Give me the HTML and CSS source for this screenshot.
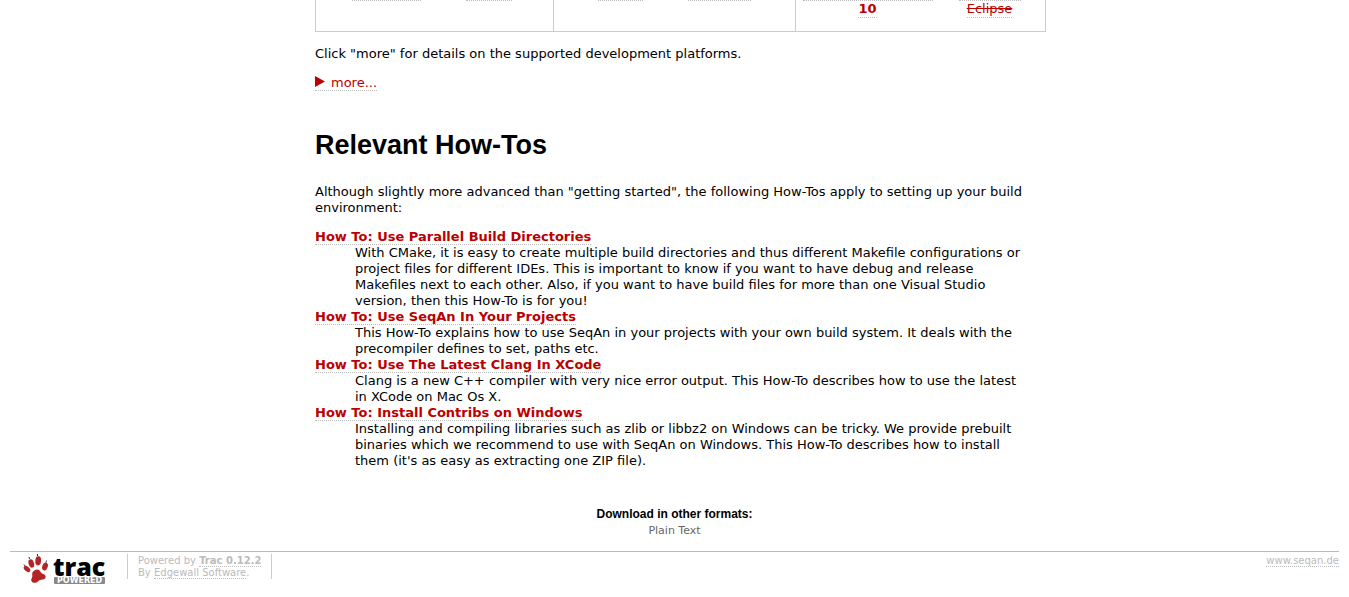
FILE: index.html
```
<!DOCTYPE html>
<html lang="en">
<head>
<meta charset="utf-8">
<title>Getting Started</title>
<link rel="stylesheet" href="styles.css">
</head>
<body>
<main class="wiki">
  <table class="platforms">
    <tbody>
      <tr>
        <td class="windows"><div class="links"><a href="#" class="link rule-69" aria-label="Windows"></a><a href="#" class="link rule-46" aria-label="Makefiles"></a></div></td>
        <td class="linux"><div class="links"><a href="#" class="link rule-45" aria-label="Linux"></a><a href="#" class="link rule-63" aria-label="Eclipse"></a></div></td>
        <td class="visual"><div class="links">
          <div class="stack"><a href="#" class="link rule-130" aria-label="Visual Studio"></a><a href="#" class="link"><b>10</b></a></div>
          <div class="stack"><a href="#" class="link rule-62" aria-label="Windows Eclipse"></a><a href="#" class="link"><del>Eclipse</del></a></div>
        </div></td>
      </tr>
    </tbody>
  </table>
  <p>Click "more" for details on the supported development platforms.</p>
  <p><a href="#" class="link"><svg class="arrow" viewBox="0 0 10 11" aria-hidden="true"><path d="M0 0 10 5.500 0 11z"/></svg>more...</a></p>
  <h1>Relevant How-Tos</h1>
  <p>Although slightly more advanced than "getting started", the following How-Tos apply to setting up your build<br>environment:</p>
  <dl>
    <dt><a href="#" class="link">How To: Use Parallel Build Directories</a></dt>
    <dd>With CMake, it is easy to create multiple build directories and thus different Makefile configurations or<br>project files for different IDEs. This is important to know if you want to have debug and release<br>Makefiles next to each other. Also, if you want to have build files for more than one Visual Studio<br>version, then this How-To is for you!</dd>
    <dt><a href="#" class="link">How To: Use SeqAn In Your Projects</a></dt>
    <dd>This How-To explains how to use SeqAn in your projects with your own build system. It deals with the<br>precompiler defines to set, paths etc.</dd>
    <dt><a href="#" class="link">How To: Use The Latest Clang In XCode</a></dt>
    <dd>Clang is a new C++ compiler with very nice error output. This How-To describes how to use the latest<br>in XCode on Mac Os X.</dd>
    <dt><a href="#" class="link">How To: Install Contribs on Windows</a></dt>
    <dd>Installing and compiling libraries such as zlib or libbz2 on Windows can be tricky. We provide prebuilt<br>binaries which we recommend to use with SeqAn on Windows. This How-To describes how to install<br>them (it's as easy as extracting one ZIP file).</dd>
  </dl>
</main>
<section class="formats">
  <h3>Download in other formats:</h3>
  <a href="#">Plain Text</a>
</section>
<footer class="footer">
  <a href="#" class="logo" aria-label="Trac Powered">
    <svg viewBox="0 0 84 30" aria-hidden="true">
      <g class="paw">
        <ellipse cx="4" cy="15" rx="2.300" ry="3.800" transform="rotate(-50 4 15)"/>
        <ellipse cx="8.300" cy="9.500" rx="2.700" ry="4.300" transform="rotate(-18 8.300 9.500)"/>
        <ellipse cx="15.200" cy="6.800" rx="2.900" ry="4.600" transform="rotate(4 15.200 6.800)"/>
        <ellipse cx="22" cy="12.500" rx="2.700" ry="4" transform="rotate(20 22 12.500)"/>
        <path d="M11.500 16.500c2.500-2 5-.8 5.800 1 .8 1.700 1.600 2 3.500 2.800 3 1.400 2.200 4.700-.8 5.200-2.500.3-3.500.5-5 2-1.800 1.700-5 1.800-6.300 0-1.200-1.700 0-3 .5-4.500.4-1.400-.2-2.300 0-3.500.2-1.400 1-2.200 2.300-3z"/>
      </g>
      <path class="claws" d="m1 10.500 1 1.500M6 3l.5 2M14.500 0v2M23.500 6.500l-.5 2"/>
      <text class="word" x="30" y="22">trac</text>
      <rect class="plate" x="31" y="23" width="51" height="7" rx="1"/>
      <text class="powered" x="34" y="29">POWERED</text>
    </svg>
  </a>
  <p class="credit">Powered by <a href="#"><b>Trac 0.12.2</b></a><br>By <a href="#">Edgewall Software</a>.</p>
  <p class="site"><a href="#">www.seqan.de</a></p>
</footer>
</body>
</html>
```
FILE: styles.css
```
body {
  margin: 0 10px;
  background: #fff;
  color: #000;
  font: 13px/16px Verdana, "DejaVu Sans", sans-serif;
}
a {
  color: #b00;
  text-decoration: none;
}
.link {
  border-bottom: 1px dotted #bbb;
}
.wiki {
  max-width: 731px;
  margin: 0 auto;
  padding-left: 12px;
}
.wiki p {
  margin: 13px 0;
}
.wiki .platforms + p {
  margin-top: 14px;
}
.platforms {
  width: 100%;
  border-collapse: collapse;
  table-layout: fixed;
}
.platforms td {
  height: 31px;
  padding: 0;
  border: 1px solid #ccc;
  border-top: 0;
  vertical-align: top;
}
.windows { width: 237px; }
.linux { width: 241px; }
.links {
  display: flex;
  justify-content: center;
  gap: 45px;
}
.visual .links { gap: 26px; }
.windows .links { padding-right: 5px; }
.visual .links { padding-right: 18px; }
.stack {
  display: flex;
  flex-direction: column;
  align-items: center;
}
.rule-45 { width: 45px; }
.rule-46 { width: 46px; }
.rule-62 { width: 62px; }
.rule-63 { width: 63px; }
.rule-69 { width: 69px; }
.rule-130 { width: 130px; }
.arrow {
  width: 10px;
  height: 11px;
  margin-right: 6px;
  fill: #b00;
}
h1 {
  margin: 38px 0 23px;
  font: bold 27px/32px Arial, "Liberation Sans", sans-serif;
}
dl { margin: 0; }
dt { font-weight: bold; }
dd { margin-left: 40px; }
.formats {
  margin-top: 37px;
  text-align: center;
  font-size: 11px;
}
.formats h3 {
  margin: 0 0 1px;
  font: bold 12px/16px Arial, "Liberation Sans", sans-serif;
}
.formats a { color: #666; }
.footer {
  display: flex;
  align-items: flex-start;
  margin-top: 12px;
  padding: 2px 0 10px;
  border-top: 1px solid #bbb;
  color: #bbb;
  font-size: 10px;
  line-height: 12px;
}
.footer p {
  margin: 0;
  padding-top: 1px;
}
.footer p a {
  border-bottom: 1px dotted #bbb;
  color: #bbb;
}
.logo {
  margin: 0 20px 0 13px;
}
.logo svg {
  display: block;
  width: 84px;
  height: 30px;
  overflow: visible;
}
.paw { fill: #b42424; }
.claws {
  fill: none;
  stroke: #333;
  stroke-width: 1;
}
.word {
  font: 800 25px "Open Sans", sans-serif;
}
.plate { fill: #888; }
.powered {
  fill: #fff;
  font: bold 8px "DejaVu Sans", sans-serif;
}
.footer .credit {
  padding: 1px 10px 0;
  border: solid #ccc;
  border-width: 0 1px;
}
.footer .site { margin-left: auto; }
```
